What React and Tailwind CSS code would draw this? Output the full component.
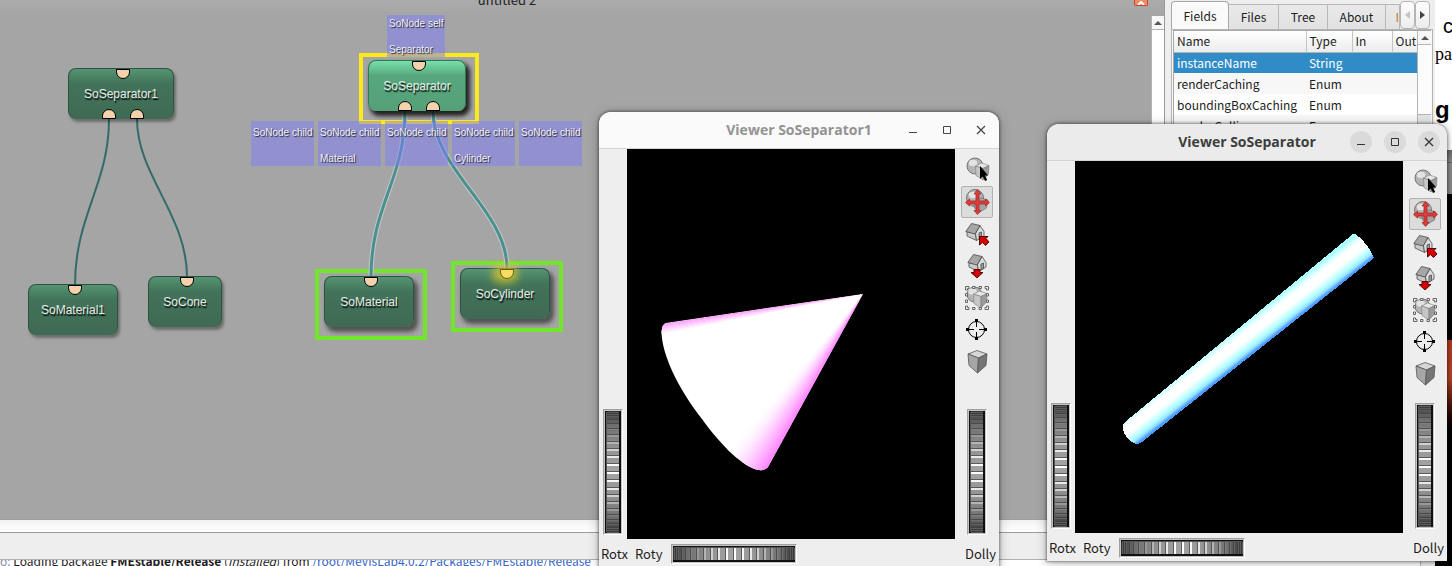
import React from "react";

const UI = "font-['Noto_Sans_CJK_SC','Noto_Sans',sans-serif]";

/* ---------- network canvas ---------- */

function Connector({ up = false, hot = false }) {
  const fill = hot ? "#f8dc62" : "#f4d2ab";
  const stroke = hot ? "#6b5a10" : "#000";
  return (
    <svg width="14" height="10" viewBox="0 0 14 10" className="relative block shrink-0 overflow-visible" aria-hidden="true">
      <path
        d={up ? "M.5 9.5V7A6.5 6.5 0 0 1 13.5 7V9.5Z" : "M.5 .5V3A6.5 6.5 0 0 0 13.5 3V.5Z"}
        fill={fill}
        stroke={stroke}
        strokeWidth="1"
      />
    </svg>
  );
}

function Node({ name, place, active = false, raised = false, outputs = 0, hot = false }) {
  const skin = active
    ? "border-[#2f7a56] bg-linear-to-b from-[#78e0aa] via-[#57a67d] via-30% to-[#55a078]"
    : "border-[#2b5540] bg-linear-to-b from-[#559473] via-[#42735a] via-30% to-[#3f6a53]";
  const shadow = active
    ? "shadow-[3px_4px_4px_1px_rgba(0,0,0,0.8)]"
    : raised
      ? "shadow-[3px_4px_4px_1px_rgba(0,0,0,0.5)]"
      : "shadow-[2px_3px_3px_0px_rgba(0,0,0,0.35)]";
  return (
    <div className={`absolute flex h-[51px] flex-col items-center rounded-lg border-x border-t ${skin} ${shadow} ${place}`}>
      <div className="relative pl-1">
        {hot && <div className="absolute -inset-1 rounded-full bg-[#e8d020] opacity-70 blur-xs" />}
        <Connector hot={hot} />
      </div>
      <span className="py-[7px] text-xs leading-4 text-[#e4ece7] [text-shadow:1px_2px_1px_rgba(0,0,0,0.9)]">{name}</span>
      {outputs > 0 && (
        <div className="flex gap-3.5 pl-1">
          <Connector up />
          <Connector up />
        </div>
      )}
    </div>
  );
}

function Tag({ title, value, place }) {
  return (
    <div className={`absolute flex flex-col justify-between overflow-hidden bg-[#7f7dfb]/50 pl-0.5 text-[10px] leading-3 whitespace-nowrap text-[#f1f1f8] [text-shadow:1px_1px_1px_rgba(0,0,0,0.8)] ${place}`}>
      <span>{title}</span>
      {value && <span>{value}</span>}
    </div>
  );
}

function Network() {
  return (
    <div className="absolute inset-0 font-['Liberation_Sans',Arial,sans-serif]">
      <div className="absolute top-[53px] left-[359px] h-[71px] w-[120px] border-4 border-[#ffe91c]" />
      <div className="absolute top-[269px] left-[315px] h-[71px] w-[112px] border-4 border-[#72e62a]" />
      <div className="absolute top-[261px] left-[451px] h-[71px] w-[112px] border-4 border-[#72e62a]" />
      <svg className="absolute inset-0 size-full" aria-hidden="true" fill="none">
        <g stroke="#336b6c" strokeWidth="2">
          <path d="M109 119C109 185 75 215 75 285" />
          <path d="M137 119C137 175 187 215 187 277" />
        </g>
        <g stroke="#c3c9c9" strokeWidth="5">
          <path d="M405 111C405 180 371 205 371 277" />
          <path d="M433 111C433 170 507 210 507 268" />
        </g>
        <g stroke="#4b8f8f" strokeWidth="3">
          <path d="M405 111C405 180 371 205 371 277" />
          <path d="M433 111C433 170 507 210 507 268" />
        </g>
      </svg>
      <Node name="SoSeparator1" place="top-[68px] left-[68px] w-[106px]" outputs={2} />
      <Node name="SoMaterial1" place="top-[284px] left-[28px] w-[90px]" />
      <Node name="SoCone" place="top-[276px] left-[148px] w-[74px]" />
      <Node name="SoSeparator" place="top-[60px] left-[368px] w-[98px]" outputs={2} active />
      <Node name="SoMaterial" place="top-[276px] left-[324px] w-[90px]" raised />
      <Node name="SoCylinder" place="top-[268px] left-[460px] w-[90px]" raised hot />
      <Tag title="SoNode self" value="Separator" place="top-[15px] left-[387px] h-[42px] w-[58px] pt-[3px] pb-px" />
      <Tag title="SoNode child" place="top-[121px] left-[251px] h-[45px] w-[63px] pt-1.5 pb-px" />
      <Tag title="SoNode child" value="Material" place="top-[121px] left-[318px] h-[45px] w-[63px] pt-1.5 pb-px" />
      <Tag title="SoNode child" place="top-[121px] left-[385px] h-[45px] w-[63px] pt-1.5 pb-px" />
      <Tag title="SoNode child" value="Cylinder" place="top-[121px] left-[452px] h-[45px] w-[63px] pt-1.5 pb-px" />
      <Tag title="SoNode child" place="top-[121px] left-[519px] h-[45px] w-[63px] pt-1.5 pb-px" />
    </div>
  );
}

function ScrollUp() {
  return (
    <button type="button" aria-label="Scroll up" className="flex h-[14px] w-full shrink-0 items-center justify-center border-b border-[#b4b4b4] bg-[#f7f7f7]">
      <svg width="8" height="4" viewBox="0 0 8 4" aria-hidden="true">
        <path d="M0 4L4 0L8 4Z" fill="#555" />
      </svg>
    </button>
  );
}

function Workspace() {
  return (
    <div className="flex min-w-0 flex-1 flex-col border-r border-[#9a9a9a]">
      <div className="relative flex min-h-0 flex-1 flex-col bg-[#a5a5a5]">
        <Network />
        <div className="relative flex h-4 items-start bg-linear-to-b from-[#afafaf]/60 to-transparent">
          <h1 className={`flex h-2 flex-1 flex-col justify-end overflow-hidden pr-[120px] text-center text-[13px] leading-4 text-[#222] ${UI}`}>
            <span>untitled 2</span>
          </h1>
          <button type="button" aria-label="Close network" className="mr-4 flex h-1.5 w-[14px] items-end justify-center overflow-hidden rounded-b-xs border border-t-0 border-[#c8442a] bg-[#ee8a66]">
            <svg width="8" height="4" viewBox="0 0 8 4" aria-hidden="true">
              <path d="M1 4L4 1L7 4" fill="none" stroke="#fff" strokeWidth="2" />
            </svg>
          </button>
        </div>
        <div className="relative flex min-h-0 flex-1 justify-end">
          <div className="w-[13px] border-l border-[#b4b4b4] bg-white">
            <ScrollUp />
          </div>
        </div>
      </div>
      <div className="h-[13px] shrink-0 border-t border-[#9c9c9c] bg-linear-to-b from-[#f1f1f1] to-white" />
    </div>
  );
}

/* ---------- module inspector ---------- */

function Inspector() {
  const tab = "-ml-px h-[25px] shrink-0 border border-b-0 border-[#b8b8b8] bg-linear-to-b from-[#e9e9e9] to-[#e2e2e2]";
  const rows = [
    ["instanceName", "String"],
    ["renderCaching", "Enum"],
    ["boundingBoxCaching", "Enum"],
    ["renderCulling", "Enum"],
  ];
  const th = "h-[21px] border-r border-[#c4c4c4] px-[3px] text-left font-normal";
  return (
    <aside className={`flex w-[270px] shrink-0 flex-col bg-[#eee] pt-px pr-0.5 pl-1.5 text-xs leading-4 text-[#1d1d1d] ${UI}`}>
      <div className="flex h-7 shrink-0 items-end">
        <button type="button" className="relative h-7 w-[58px] shrink-0 rounded-t-sm border border-b-0 border-[#a8a8a8] bg-[#fafafa]">Fields</button>
        <button type="button" className={`${tab} w-[51px]`}>Files</button>
        <button type="button" className={`${tab} w-[50px]`}>Tree</button>
        <button type="button" className={`${tab} w-[59px]`}>About</button>
        <button type="button" aria-label="More" className={`${tab} w-[15px] overflow-hidden text-right text-[#c07a1c]`}>I</button>
        <button type="button" aria-label="Previous tab" className="flex h-7 w-[15px] shrink-0 items-center justify-center rounded-sm border border-[#b4b4b4] bg-linear-to-b from-[#fdfdfd] to-[#ededed]">
          <svg width="5" height="8" viewBox="0 0 5 8" aria-hidden="true"><path d="M5 0V8L0 4Z" fill="#c4c4c4" /></svg>
        </button>
        <button type="button" aria-label="Next tab" className="flex h-7 w-[15px] shrink-0 items-center justify-center rounded-sm border border-[#b4b4b4] bg-linear-to-b from-[#fdfdfd] to-[#ededed]">
          <svg width="5" height="8" viewBox="0 0 5 8" aria-hidden="true"><path d="M0 0V8L5 4Z" fill="#444" /></svg>
        </button>
      </div>
      <div className="min-h-0 flex-1 overflow-hidden border border-[#b4b4b4] bg-[#f7f7f7] px-px">
        <div className="flex h-full border-t border-l border-[#a8a8a8] bg-white">
          <div className="min-w-0 flex-1">
            <table className="w-full table-fixed border-collapse">
              <thead className="bg-linear-to-b from-white to-[#ececec]">
                <tr className="border-b border-[#b4b4b4]">
                  <th className={`${th} w-[132px]`}>Name</th>
                  <th className={`${th} w-[46px]`}>Type</th>
                  <th className={`${th} w-[40px]`}>In</th>
                  <th className="h-[21px] px-[3px] text-left font-normal">Out</th>
                </tr>
              </thead>
              <tbody>
                {rows.map(([name, type], i) => (
                  <tr key={name} className={i === 0 ? "bg-[#308cc6] text-white" : i % 2 ? "bg-[#f7f7f7]" : "bg-white"}>
                    <td className="h-[21px] px-[3px]">{name}</td>
                    <td className="px-[3px]">{type}</td>
                    <td />
                    <td />
                  </tr>
                ))}
              </tbody>
            </table>
          </div>
          <div className="w-[14px] shrink-0 border-l border-[#b4b4b4] bg-[#fcfcfc]">
            <ScrollUp />
            <div className="h-[70px] border-b border-[#b4b4b4]" />
            <div className="h-full bg-[#e4e4e4]" />
          </div>
        </div>
      </div>
    </aside>
  );
}

function Console() {
  return (
    <div className="shrink-0 border-t border-[#9c9c9c] bg-[#eee] pt-[26px]">
      <div className="flex h-[7px] border-t border-[#b0b0b0] bg-white">
        <p className={`flex min-w-0 flex-1 flex-col justify-end overflow-hidden text-xs leading-[10px] whitespace-nowrap text-[#1d1d1d] ${UI}`}>
          <span>
            <span className="text-[#7f8fa6]">o:</span> Loading package <b>FMEstable/Release</b> (<i>Installed</i>) from{" "}
            <a href="#package" className="text-[#3465c8]">/root/MeVisLab4.0.2/Packages/FMEstable/Release</a>
          </span>
        </p>
        <div className="w-[15px] shrink-0 border-l border-[#b4b4b4] bg-[#eee]" />
      </div>
    </div>
  );
}

function DocumentEdge() {
  return (
    <div className="flex w-[17px] shrink-0 flex-col overflow-hidden bg-white text-black">
      <div className="flex h-[150px] flex-col whitespace-nowrap">
        <span className="pt-3 pl-2 font-['Liberation_Sans',sans-serif] text-xl leading-7">c</span>
        <span className="pt-0.5 font-['Liberation_Serif',serif] text-lg leading-6">pa</span>
        <span className="pt-7 font-['Liberation_Sans',sans-serif] text-2xl leading-8 font-bold">g</span>
      </div>
      <div className="flex h-11 flex-col bg-[#8c8c8c]">
        <div className="h-[13px] border-b border-[#666] bg-linear-to-b from-[#6a6a6a] to-[#8c8c8c]" />
      </div>
      <div className="flex flex-1 flex-col bg-black pt-[146px]">
        <div className="h-[96px] bg-linear-to-b from-[#b63a20] via-[#b8432a] via-40% to-black" />
      </div>
    </div>
  );
}

/* ---------- viewer windows ---------- */

const RIDGES = Array.from({ length: 23 }, (_, i) => {
  const angle = (i - 11) * 0.133;
  return { pos: Math.round(63 + 60 * Math.sin(angle)), light: Math.cos(angle) };
});
const grey = (v) => {
  const c = Math.round(v);
  return `rgb(${c},${c},${c})`;
};

function Wheel({ id, vertical = false }) {
  const w = vertical ? 20 : 126;
  const h = vertical ? 126 : 20;
  return (
    <span className={`relative block shrink-0 ${vertical ? "h-[126px] w-5" : "h-5 w-[126px]"}`}>
      <svg width={w} height={h} viewBox={`0 0 ${w} ${h}`} className="block" aria-hidden="true">
        <defs>
          <linearGradient id={`${id}-body`} x1="0" y1="0" x2="1" y2="0">
            <stop offset="0" stopColor="#3c3c3c" />
            <stop offset=".12" stopColor="#707070" />
            <stop offset=".3" stopColor="#929292" />
            <stop offset=".5" stopColor="#a4a4a4" />
            <stop offset=".7" stopColor="#929292" />
            <stop offset=".88" stopColor="#707070" />
            <stop offset="1" stopColor="#303030" />
          </linearGradient>
        </defs>
        <g transform={vertical ? "matrix(0 1 1 0 0 0)" : undefined}>
          <rect width="126" height="20" fill="#fff" />
          <path d="M0 20V0H126L125 1H1V19Z" fill="#a0a0a0" />
          <rect x="1" y="1" width="124" height="18" fill="#c4c4c4" />
          <rect x="2" y="2" width="122" height="16" fill="#111" />
          <rect x="3" y="3" width="120" height="1" fill="#555" />
          <rect x="3" y="4" width="120" height="12" fill={`url(#${id}-body)`} />
          {RIDGES.map((r) => (
            <g key={r.pos}>
              <rect x={r.pos - 1} y="4" width="1" height="12" fill={grey(50 + 40 * r.light)} />
              <rect x={r.pos} y="4" width={r.light > 0.7 ? 2 : 1} height="12" fill={grey(90 + 165 * r.light ** 4)} />
            </g>
          ))}
        </g>
      </svg>
      <input id={id} type="range" defaultValue="50" className="absolute inset-0 size-full cursor-pointer opacity-0" />
    </span>
  );
}

const Ball = ({ cx = 14, cy = 12, r = 8 }) => (
  <g>
    <circle cx={cx} cy={cy} r={r} fill="#b4b4b4" stroke="#5e5e5e" strokeWidth=".8" />
    <ellipse cx={cx - 2} cy={cy - 3} rx="4.2" ry="3.2" fill="#e2e2e2" />
  </g>
);

const Block = () => (
  <g stroke="#7c7c7c" strokeWidth=".6" strokeLinejoin="round">
    <path d="M14.500 12L20.500 9L28 11.500L22 14.500Z" fill="#e6e6e6" />
    <path d="M14.500 12L22 14.500V26L15 21.500Z" fill="#c6c6c6" />
    <path d="M28 11.500L22 14.500V26L27.500 20Z" fill="#9a9a9a" />
  </g>
);

const House = () => (
  <g stroke="#4a4a4a" strokeWidth=".8" strokeLinejoin="round">
    <path d="M6 13.500V18L15.500 22.500L14.500 15.500Z" fill="#c9c9c9" />
    <path d="M19 7.500L23 13.500V18L15.500 22.500L14.500 15.500Z" fill="#dcdcdc" />
    <path d="M4.800 13.500L10.500 5.500L19 7.500L14 16Z" fill="#a6a6a6" />
    <path d="M18 21V15L20.500 14V19.700Z" fill="#9c9c9c" />
  </g>
);

const red = { fill: "#d40000", stroke: "#4a0000", strokeWidth: 0.9, strokeLinejoin: "round" };

const TOOLS = [
  ["Pick", (
    <g>
      <Ball />
      <Block />
      <path d="M19 12V25L21.800 22.500L24 27L26.200 26L24 21.600H27.200Z" fill="#000" />
    </g>
  )],
  ["View", (
    <g>
      <Ball cx={14} cy={12} r={8.5} />
      <path d="M13 16L20 12L27 14L25.500 22L18 26.500L13.500 22Z" fill="#a6a6a6" stroke="#666" strokeWidth=".6" />
      <path
        d="M16.500 3.500L20 8H18V15H24.500V13L28.500 16.500L24.500 20V18H18V24.500H20L16.500 28.500L13 24.500H15V18H8.500V20L4.500 16.500L8.500 13V15H15V8H13Z"
        fill="#dc3c3c"
        stroke="#a02020"
        strokeWidth=".7"
        strokeLinejoin="round"
      />
    </g>
  )],
  ["Home", (
    <g>
      <House />
      <path d="M18.500 18.500H27L25 20.500L28 24L24.500 27.500L21.500 24.500L18.500 27Z" {...red} />
    </g>
  )],
  ["Set home", (
    <g>
      <g transform="translate(2 -1)"><House /></g>
      <path d="M13 19.500H19V22.500H22L16 28L10 22.500H13Z" {...red} />
    </g>
  )],
  ["View all", (
    <g>
      <Ball cx={13.500} cy={12.500} r={7.5} />
      <g transform="translate(-2 0)"><Block /></g>
      <g fill="#eee" stroke="#666" strokeWidth="1">
        <path d="M8 4.500H4.500V8H6.500V6.500H8ZM24 4.500H27.500V8H25.500V6.500H24ZM8 27.500H4.500V24H6.500V25.500H8ZM24 27.500H27.500V24H25.500V25.500H24Z" />
        <path d="M11.500 4.500H14V6.500H11.500ZM18 4.500H20.500V6.500H18ZM11.500 25.500H14V27.500H11.500ZM18 25.500H20.500V27.500H18ZM4.500 11.500H6.500V14H4.500ZM4.500 18H6.500V20.500H4.500ZM25.500 11.500H27.500V14H25.500ZM25.500 18H27.500V20.500H25.500Z" />
      </g>
    </g>
  )],
  ["Seek", (
    <g>
      <circle cx="15.500" cy="15.500" r="8" fill="none" stroke="#000" strokeWidth="1" />
      <path d="M15.500 6V13M15.500 18V25M6 15.500H13M18 15.500H25" stroke="#000" strokeWidth="1" />
      <path d="M14 5H17V8H14ZM14 23H17V26H14ZM5 14H8V17H5ZM23 14H26V17H23Z" fill="#000" />
    </g>
  )],
  ["Perspective", (
    <g stroke="#555" strokeWidth=".8" strokeLinejoin="round">
      <path d="M7 8L16 4.500L26 8L17.500 12Z" fill="#d6d6d6" />
      <path d="M7 8L17.500 12L16.500 27L8 19.500Z" fill="#a6a6a6" />
      <path d="M26 8L17.500 12L16.500 27L25 19.500Z" fill="#757575" />
    </g>
  )],
];

function Viewer({ id, title, place, focused = false, children }) {
  const control = `flex size-[22px] items-center justify-center rounded-full ${focused ? "bg-[#dadada] text-[#333]" : "text-[#444]"}`;
  return (
    <section
      aria-label={title}
      className={`absolute flex w-[400px] flex-col overflow-hidden rounded-t-xl bg-[#eee] text-[13px] leading-4 text-[#1d1d1d] shadow-[0_0_3px_1px_rgba(0,0,0,0.4),0_2px_12px_rgba(0,0,0,0.25)] ${UI} ${place}`}
    >
      <header className={`grid h-[37px] shrink-0 grid-cols-[1fr_auto_1fr] items-center border-b border-[#d4d4d4] px-[7px] ${focused ? "bg-[#ebebeb]" : "bg-[#fafafa]"}`}>
        <span />
        <h2 className={`font-['Open_Sans','Noto_Sans',sans-serif] text-sm leading-5 font-bold ${focused ? "text-[#3d3d3d]" : "text-[#929292]"}`}>{title}</h2>
        <div className="flex justify-end gap-3">
          <button type="button" aria-label="Minimize" className={control}>
            <svg width="10" height="10" viewBox="0 0 10 10" aria-hidden="true"><path d="M1 7.500H9" stroke="currentColor" strokeWidth="1" /></svg>
          </button>
          <button type="button" aria-label="Maximize" className={control}>
            <svg width="10" height="10" viewBox="0 0 10 10" aria-hidden="true"><path d="M1.500 1.500H8.500V8.500H1.500Z" fill="none" stroke="currentColor" strokeWidth="1" /></svg>
          </button>
          <button type="button" aria-label="Close" className={control}>
            <svg width="10" height="10" viewBox="0 0 10 10" aria-hidden="true"><path d="M1 1L9 9M9 1L1 9" stroke="currentColor" strokeWidth="1.200" /></svg>
          </button>
        </div>
      </header>
      <div className="flex min-h-0 flex-1">
        <div className="flex w-7 shrink-0 flex-col items-center justify-end pb-1">
          <Wheel id={`${id}-rotx`} vertical />
        </div>
        <div className="min-w-0 flex-1 bg-black">{children}</div>
        <div className="flex w-11 shrink-0 flex-col items-center justify-between pt-[5px] pb-1">
          <div className="flex flex-col">
            {TOOLS.map(([name, icon]) => (
              <button
                key={name}
                type="button"
                aria-label={name}
                className={`flex size-8 items-center justify-center rounded-xs border ${name === "View" ? "border-[#b2b2b2] bg-[#dcdcdc]" : "border-transparent"}`}
              >
                <svg width="32" height="32" viewBox="0 0 32 32" className="shrink-0" aria-hidden="true">{icon}</svg>
              </button>
            ))}
          </div>
          <Wheel id={`${id}-dolly`} vertical />
        </div>
      </div>
      <div className="flex h-7 shrink-0 items-center justify-between pt-px pr-[3px] pl-0.5">
        <div className="flex items-center gap-2">
          <label htmlFor={`${id}-rotx`} className="w-[26px]">Rotx</label>
          <label htmlFor={`${id}-roty`} className="w-7">Roty</label>
          <Wheel id={`${id}-roty`} />
        </div>
        <label htmlFor={`${id}-dolly`}>Dolly</label>
      </div>
    </section>
  );
}

/* Shading fans out from the apex, so each tone is a thin wedge. */
const APEX = [236, 145];
function fan(from, to, steps) {
  const at = (t) => [from[0] + (to[0] - from[0]) * t, from[1] + (to[1] - from[1]) * t];
  return Array.from({ length: steps }, (_, i) => {
    const a = at(i / steps);
    const b = at((i + 1.2) / steps);
    return { d: `M${APEX}L${a}L${b}Z`, t: i / steps };
  });
}
const RIGHT_FAN = fan([146, 329], [85, 318], 30);
const TOP_FAN = fan([20, 177], [20, 188], 8);

function Cone() {
  return (
    <svg className="block size-full" viewBox="0 0 328 390" role="img" aria-label="Cone" shapeRendering="crispEdges">
      <defs>
        <clipPath id="cone-clip">
          <path d="M236 145L39 174Q35 175 34.500 183C35 205 50 238 75 270C95 298 118 319 132 321Q138 322 141 318Z" />
        </clipPath>
      </defs>
      <g clipPath="url(#cone-clip)">
        <rect width="328" height="390" fill="#fff" />
        {RIGHT_FAN.map((w) => (
          <path key={w.d} d={w.d} fill={`rgb(255,${Math.round(95 + 160 * Math.sin((w.t * Math.PI) / 2))},255)`} />
        ))}
        {TOP_FAN.map((w) => (
          <path key={w.d} d={w.d} fill={`rgb(255,${Math.round(165 + 90 * w.t)},255)`} />
        ))}
      </g>
    </svg>
  );
}

function Cylinder() {
  return (
    <svg className="block size-full" viewBox="0 0 328 372" role="img" aria-label="Cylinder" shapeRendering="crispEdges">
      <defs>
        <linearGradient id="cylinder-skin" gradientUnits="userSpaceOnUse" x1="163.500" y1="167.500" x2="180.500" y2="189">
          <stop offset="0" stopColor="#acffff" />
          <stop offset=".1" stopColor="#d4ffff" />
          <stop offset=".26" stopColor="#fff" />
          <stop offset=".52" stopColor="#fff" />
          <stop offset=".76" stopColor="#b4ffff" />
          <stop offset=".88" stopColor="#9ce4ff" />
          <stop offset="1" stopColor="#4c9cff" />
        </linearGradient>
      </defs>
      <path d="M278 73Q280 72 284 76Q294 85 299 97L67 281Q63 284 59 282Q50 278 48 268Q47 264 50 261Z" fill="url(#cylinder-skin)" />
    </svg>
  );
}

export default function App() {
  return (
    <div className="relative flex h-screen min-h-[560px] overflow-hidden bg-[#eee]">
      <main className="flex min-w-0 flex-1 flex-col">
        <div className="flex min-h-0 flex-1">
          <Workspace />
          <Inspector />
        </div>
        <Console />
      </main>
      <DocumentEdge />
      <Viewer id="cone" title="Viewer SoSeparator1" place="top-28 left-[599px] h-[455px]">
        <Cone />
      </Viewer>
      <Viewer id="cylinder" title="Viewer SoSeparator" place="top-[124px] left-[1047px] h-[437px]" focused>
        <Cylinder />
      </Viewer>
    </div>
  );
}
